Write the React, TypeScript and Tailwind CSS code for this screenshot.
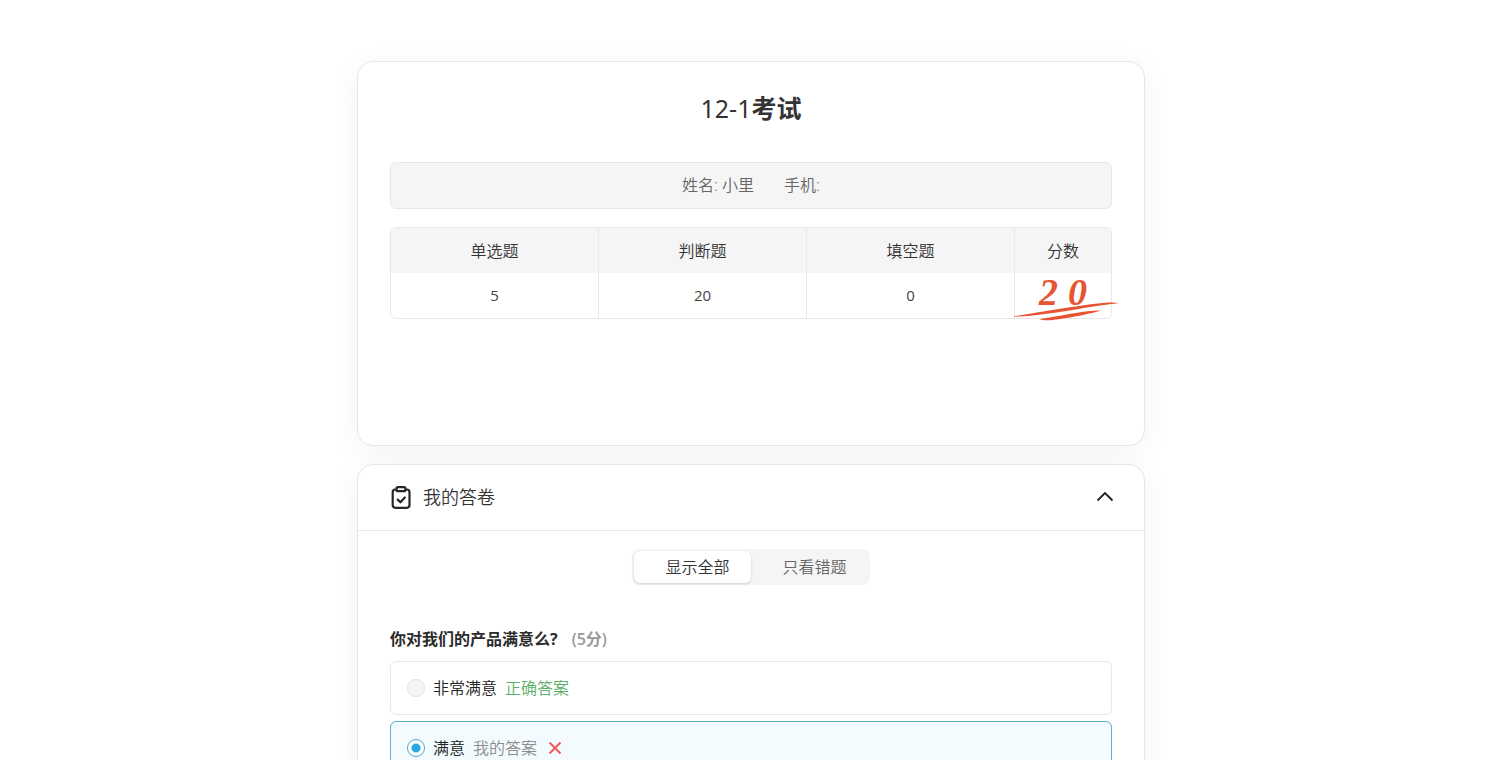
import { useState } from "react";

const sections = [
  { name: "单选题", score: 5 },
  { name: "判断题", score: 20 },
  { name: "填空题", score: 0 },
];

const options = [
  { label: "非常满意", correct: true, mine: false },
  { label: "满意", correct: false, mine: true },
];

function ClipboardIcon() {
  return (
    <svg className="h-6 w-5" viewBox="0 0 20 24" fill="none" stroke="#27272b" strokeWidth="2.200" strokeLinecap="round" strokeLinejoin="round" aria-hidden="true">
      <path d="M5.500 4.500H4.200A2.700 2.700 0 0 0 1.700 7.200V20.100A2.700 2.700 0 0 0 4.400 22.800H15.800A2.700 2.700 0 0 0 18.500 20.100V7.200A2.700 2.700 0 0 0 15.800 4.500H14.500" />
      <rect x="5.500" y="2.200" width="9" height="4" rx="1.500" />
      <path d="m6.700 14.600 2.700 2.700 4.400-4.800" />
    </svg>
  );
}

function ScoreMark({ value }: { value: number }) {
  return (
    <div className="relative h-[45px]">
      <span className="flex justify-center gap-2.5 font-['Liberation_Serif',serif] text-[38px] leading-[38px] font-bold text-[#e65432] italic">
        {String(value).split("").map((digit, i) => (
          <span key={i}>{digit}</span>
        ))}
      </span>
      <svg className="absolute top-[28px] -left-px h-5 w-[106px]" viewBox="0 0 106 20" fill="#e65432" aria-hidden="true">
        <path d="M0 15.200C24 11.600 60 4.800 84 2.400C93 1.500 100 1.100 105 2.100C91 3.900 81 5.400 66 7.700C42 11.600 20 15 0 15.800Z" />
        <path d="M25 18C44 16 66 9.800 87 9.600C77 12.900 53 17.600 39 19C34 19.500 28 19.300 25 18Z" />
      </svg>
    </div>
  );
}

export default function App() {
  const [wrongOnly, setWrongOnly] = useState(false);
  const [open, setOpen] = useState(true);
  const card = "rounded-2xl border border-[#e6e6e6] bg-white shadow-[0_6px_30px_rgba(0,0,0,0.05)]";
  const tab = "h-8 flex-1 rounded-md pl-2.5 text-base leading-8 font-[350]";
  const tabOn = "bg-white text-[#333] shadow-[0_1px_3px_rgba(0,0,0,0.16)]";
  const tabOff = "text-[#666]";

  return (
    <div className="h-screen overflow-hidden bg-white font-['Open_Sans','Noto_Sans_CJK_SC',sans-serif] text-base text-[#2b2b2b]">
      <main className="mx-auto flex max-w-[790px] flex-col gap-[18px] pt-[61px] pl-0.5">
        <section className={`${card} px-8 pb-[126px]`}>
          <h1 className="pt-[26px] text-center text-[25px] leading-10 text-[#333]">
            <span className="font-['Noto_Sans',sans-serif] font-normal">12-1</span>
            <span className="font-bold">考试</span>
          </h1>
          <div className="mt-[34px] flex h-[47px] items-center justify-center gap-[30px] rounded-md border border-[#e8e8e8] bg-[#f5f5f5] pb-0.5 font-[350] text-[#666]">
            <span>姓名: 小里</span>
            <span>手机:</span>
          </div>
          <div className="mt-[18px] rounded-md border border-[#e8e8e8]">
            <table className="w-full table-fixed border-separate border-spacing-0 text-center">
              <thead>
                <tr className="h-[45px] bg-[#f5f5f5]">
                  {sections.map((s) => (
                    <th key={s.name} scope="col" className="border-r border-[#e8e8e8] p-0 font-[350] text-[#333] first:rounded-tl-md">{s.name}</th>
                  ))}
                  <th scope="col" className="w-24 rounded-tr-md p-0 font-[350] text-[#333]">分数</th>
                </tr>
              </thead>
              <tbody>
                <tr className="h-[45px]">
                  {sections.map((s) => (
                    <td key={s.name} className="border-r border-[#e8e8e8] p-0 text-[15px] text-[#444]">{s.score}</td>
                  ))}
                  <td className="p-0"><ScoreMark value={20} /></td>
                </tr>
              </tbody>
            </table>
          </div>
        </section>

        <section className={card}>
          <h2 className="border-b border-[#e8e8e8]">
            <button type="button" aria-expanded={open} onClick={() => setOpen(!open)} className="flex h-[65px] w-full items-center px-[30px] pb-0.5">
              <span className="ml-[3px]"><ClipboardIcon /></span>
              <span className="ml-3 text-lg font-[350] text-[#333]">我的答卷</span>
              <svg className="ml-auto h-4 w-[18px]" viewBox="0 0 18 16" fill="none" stroke="#222" strokeWidth="1.800" aria-hidden="true">
                <path d="m1.500 11.500 7.500-7.500 7.500 7.500" />
              </svg>
            </button>
          </h2>
          {open && (
            <div className="px-8 pt-[18px]">
              <div className="mx-auto flex h-9 w-[238px] rounded-lg bg-[#f5f5f5] p-0.5">
                <button type="button" aria-pressed={!wrongOnly} onClick={() => setWrongOnly(false)} className={`${tab} ${wrongOnly ? tabOff : tabOn}`}>显示全部</button>
                <button type="button" aria-pressed={wrongOnly} onClick={() => setWrongOnly(true)} className={`${tab} ${wrongOnly ? tabOn : tabOff}`}>只看错题</button>
              </div>
              <fieldset className="mt-[42px] pb-8">
                <legend className="flex h-[34px] items-start gap-3.5 font-bold">
                  <span>你对我们的产品满意么?</span>
                  <span className="font-semibold text-[#999]">(5分)</span>
                </legend>
                <div className="flex flex-col gap-1.5">
                  {options.map((o) => (
                    <label key={o.label} className={`flex h-[54px] items-center rounded-md border px-4 pb-px ${o.mine ? "border-[#5eb0cf] bg-[#f3fbfe]" : "border-[#e8e8e8]"}`}>
                      <input type="radio" name="satisfaction" defaultChecked={o.mine} className="size-[18px] appearance-none rounded-full border border-[#ddd] bg-[#f5f5f5] checked:border-[#4ba3d6] checked:bg-[radial-gradient(circle,#28a8e0_4px,white_5px)]" />
                      <span className="ml-2 font-[350] text-[#222]">{o.label}</span>
                      {o.correct && <span className="ml-2 font-[350] text-[#5cb069]">正确答案</span>}
                      {o.mine && (
                        <>
                          <span className="ml-2 font-[350] text-[#8c8c8c]">我的答案</span>
                          <svg className="ml-3 size-3" viewBox="0 0 12 12" fill="none" stroke="#f05a5a" strokeWidth="2" role="img" aria-label="错误">
                            <path d="m.5.500 11 11M11.500.500l-11 11" />
                          </svg>
                        </>
                      )}
                    </label>
                  ))}
                </div>
              </fieldset>
            </div>
          )}
        </section>
      </main>
    </div>
  );
}
